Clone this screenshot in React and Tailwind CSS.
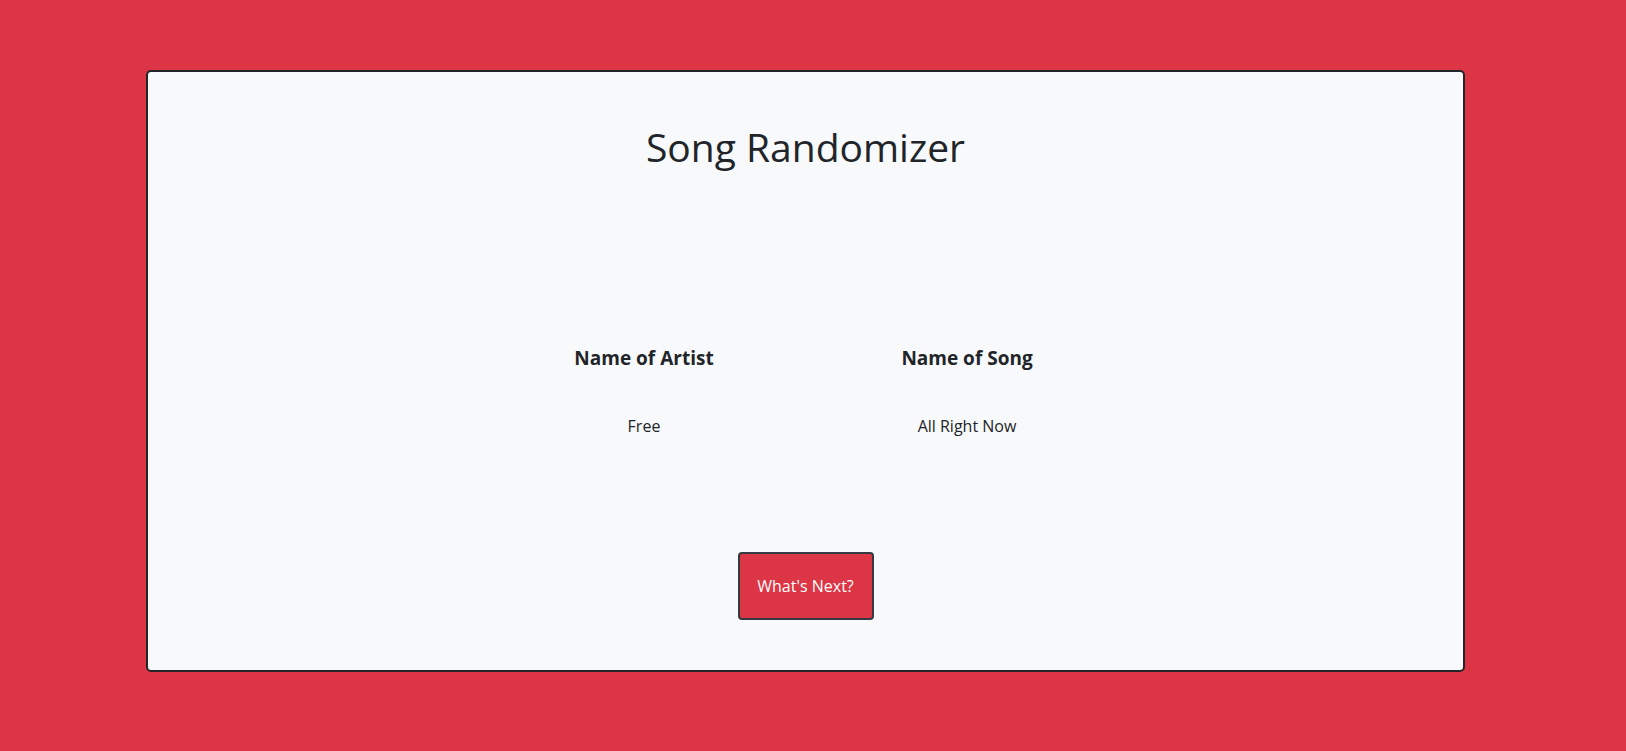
export default function App() {
  return (
    <div className="min-h-[751px] w-full bg-[#dc3545] pt-[70px] pb-[79px]" style={{ fontFamily: '"Open Sans", "Noto Sans", sans-serif' }}>
      <div className="ml-[146px] w-[1319px] h-[602px] rounded-[5px] border-2 border-[#212529] bg-[#f8f9fa] text-[#212529] flex flex-col items-center pt-[51px]">
        <h1 className="text-[39px] leading-[48px] font-normal">Song Randomizer</h1>
        <div className="mt-[175px] flex">
          <div className="w-[323px] flex flex-col items-center">
            <h5 className="text-[19px] leading-[24px] font-bold">Name of Artist</h5>
            <p className="mt-[44px] text-[16px] leading-[24px]">Free</p>
          </div>
          <div className="w-[323px] flex flex-col items-center">
            <h5 className="text-[19px] leading-[24px] font-bold">Name of Song</h5>
            <p className="mt-[44px] text-[16px] leading-[24px]">All Right Now</p>
          </div>
        </div>
        <button className="mt-[114px] w-[136px] h-[68px] rounded-[4px] border-2 border-[#343a40] bg-[#dc3545] text-white text-[16px]">
          What's Next?
        </button>
      </div>
    </div>
  );
}
